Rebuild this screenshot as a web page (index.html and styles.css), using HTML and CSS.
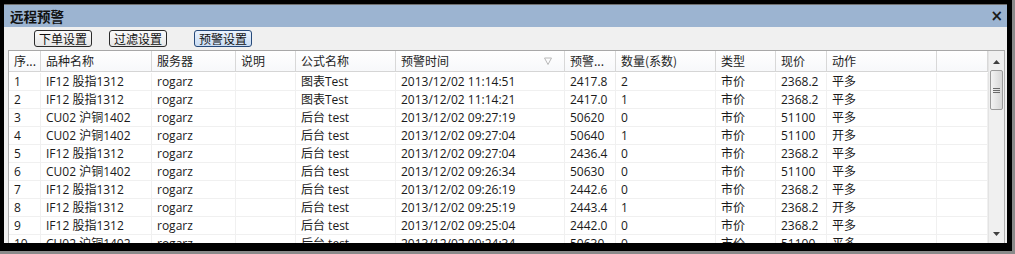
FILE: index.html
```html
<!DOCTYPE html>
<html>
<head>
<meta charset="utf-8">
<link rel="stylesheet" href="styles.css">
</head>
<body>
<div class="frame">
  <div class="win">
    <div class="titlebar">
      <span class="title">远程预警</span>
      <span class="close">×</span>
    </div>
    <div class="toolbar">
      <span class="btn b1">下单设置</span>
      <span class="btn b2">过滤设置</span>
      <span class="btn b3 active">预警设置</span>
    </div>
    <div class="list">
      <div class="table">
        <div class="row head">
          <div class="c">序...</div><div class="c">品种名称</div><div class="c">服务器</div><div class="c">说明</div><div class="c">公式名称</div>
          <div class="c sortcol">预警时间<svg class="sort" width="8" height="8" viewBox="0 0 8 8"><path d="M0.5 1 L7.5 1 L4 7.5 Z" fill="none" stroke="#b8b8b8" stroke-width="1"/></svg></div>
          <div class="c">预警...</div><div class="c">数量(系数)</div><div class="c">类型</div><div class="c">现价</div><div class="c">动作</div><div class="c"></div>
        </div>
        <div class="row"><div class="c">1</div><div class="c">IF12 股指1312</div><div class="c">rogarz</div><div class="c"></div><div class="c">图表Test</div><div class="c">2013/12/02 11:14:51</div><div class="c">2417.8</div><div class="c">2</div><div class="c">市价</div><div class="c">2368.2</div><div class="c">平多</div><div class="c"></div></div>
        <div class="row"><div class="c">2</div><div class="c">IF12 股指1312</div><div class="c">rogarz</div><div class="c"></div><div class="c">图表Test</div><div class="c">2013/12/02 11:14:21</div><div class="c">2417.0</div><div class="c">1</div><div class="c">市价</div><div class="c">2368.2</div><div class="c">平多</div><div class="c"></div></div>
        <div class="row"><div class="c">3</div><div class="c">CU02 沪铜1402</div><div class="c">rogarz</div><div class="c"></div><div class="c">后台 test</div><div class="c">2013/12/02 09:27:19</div><div class="c">50620</div><div class="c">0</div><div class="c">市价</div><div class="c">51100</div><div class="c">平多</div><div class="c"></div></div>
        <div class="row"><div class="c">4</div><div class="c">CU02 沪铜1402</div><div class="c">rogarz</div><div class="c"></div><div class="c">后台 test</div><div class="c">2013/12/02 09:27:04</div><div class="c">50640</div><div class="c">1</div><div class="c">市价</div><div class="c">51100</div><div class="c">开多</div><div class="c"></div></div>
        <div class="row"><div class="c">5</div><div class="c">IF12 股指1312</div><div class="c">rogarz</div><div class="c"></div><div class="c">后台 test</div><div class="c">2013/12/02 09:27:04</div><div class="c">2436.4</div><div class="c">0</div><div class="c">市价</div><div class="c">2368.2</div><div class="c">平多</div><div class="c"></div></div>
        <div class="row"><div class="c">6</div><div class="c">CU02 沪铜1402</div><div class="c">rogarz</div><div class="c"></div><div class="c">后台 test</div><div class="c">2013/12/02 09:26:34</div><div class="c">50630</div><div class="c">0</div><div class="c">市价</div><div class="c">51100</div><div class="c">平多</div><div class="c"></div></div>
        <div class="row"><div class="c">7</div><div class="c">IF12 股指1312</div><div class="c">rogarz</div><div class="c"></div><div class="c">后台 test</div><div class="c">2013/12/02 09:26:19</div><div class="c">2442.6</div><div class="c">0</div><div class="c">市价</div><div class="c">2368.2</div><div class="c">平多</div><div class="c"></div></div>
        <div class="row"><div class="c">8</div><div class="c">IF12 股指1312</div><div class="c">rogarz</div><div class="c"></div><div class="c">后台 test</div><div class="c">2013/12/02 09:25:19</div><div class="c">2443.4</div><div class="c">1</div><div class="c">市价</div><div class="c">2368.2</div><div class="c">开多</div><div class="c"></div></div>
        <div class="row"><div class="c">9</div><div class="c">IF12 股指1312</div><div class="c">rogarz</div><div class="c"></div><div class="c">后台 test</div><div class="c">2013/12/02 09:25:04</div><div class="c">2442.0</div><div class="c">0</div><div class="c">市价</div><div class="c">2368.2</div><div class="c">平多</div><div class="c"></div></div>
        <div class="row"><div class="c">10</div><div class="c">CU02 沪铜1402</div><div class="c">rogarz</div><div class="c"></div><div class="c">后台 test</div><div class="c">2013/12/02 09:24:34</div><div class="c">50630</div><div class="c">0</div><div class="c">市价</div><div class="c">51100</div><div class="c">平多</div><div class="c"></div></div>
      </div>
      <div class="scrollbar">
        <div class="arrow up"><svg width="7" height="4" viewBox="0 0 7 4"><path d="M3.5 0 L7 4 L0 4 Z" fill="#404040"/></svg></div>
        <div class="thumb"><span class="grip"></span><span class="grip"></span><span class="grip"></span></div>
        <div class="track"></div>
        <div class="arrow down"><svg width="7" height="4" viewBox="0 0 7 4"><path d="M0 0 L7 0 L3.5 4 Z" fill="#404040"/></svg></div>
      </div>
    </div>
  </div>
</div>
</body>
</html>
```

FILE: styles.css
```css
html, body {
  margin: 0;
  padding: 0;
  background: #8a8a8a;
}
body {
  width: 1015px;
  height: 254px;
  overflow: hidden;
  font-family: "Open Sans", "Noto Sans CJK SC", sans-serif;
  font-size: 12px;
  color: #1a1a1a;
}
.frame {
  width: 1004px;
  height: 239px;
  background: #000;
  padding: 4px 4px 8px 4px;
}
.win {
  width: 1003px;
  height: 239px;
  background: #f0f0f0;
  display: flex;
  flex-direction: column;
  overflow: hidden;
  border-top: 1px solid #6f6f6f;
  box-sizing: border-box;
}
.titlebar {
  height: 22px;
  flex: none;
  background: #9cb4d1;
  display: flex;
  align-items: center;
  justify-content: space-between;
  padding: 0 4px 0 6px;
}
.title {
  font-family: "Noto Sans CJK SC", sans-serif;
  font-weight: bold;
  font-size: 13.5px;
  color: #111;
}
.close {
  font-family: "DejaVu Sans", sans-serif;
  font-size: 15px;
  font-weight: bold;
  color: #1a1a1a;
  line-height: 1;
}
.toolbar {
  height: 23px;
  flex: none;
  display: flex;
  align-items: flex-start;
  padding-top: 3px;
  box-sizing: border-box;
}
.btn {
  height: 17px;
  box-sizing: border-box;
  border: 1px solid #2a2a2a;
  border-radius: 3px;
  background: linear-gradient(#fbfbfb, #e6e6e6);
  font-family: "Noto Sans CJK SC", sans-serif;
  font-size: 12px;
  line-height: 15px;
  padding: 0 4px;
  color: #111;
  display: inline-flex;
  align-items: center;
  justify-content: center;
}
.b1 { margin-left: 30px; width: 58px; }
.b2 { margin-left: 17px; width: 58px; }
.b3 { margin-left: 27px; width: 58px; }
.active {
  background: linear-gradient(#eaf2fc, #c9dcf4);
  border-color: #274a7a;
}
.list {
  flex: 1;
  margin: 0 2px 0 4px;
  display: flex;
  border-top: 1px solid #a8a8a8;
  border-left: 1px solid #b0b0b0;
  border-right: 1px solid #b0b0b0;
  background: #fff;
  overflow: hidden;
}
.table {
  width: 979px;
  flex: none;
  display: flex;
  flex-direction: column;
}
.row {
  display: grid;
  grid-template-columns: 32px 111px 84px 60px 100px 169px 51px 100px 60px 51px 110px 51px;
  height: 18px;
  flex: none;
  border-bottom: 1px solid #f0f0f0;
  box-sizing: border-box;
  background: #fff;
}
.row .c {
  border-right: 1px solid #f0f0f0;
  padding-left: 5px;
  line-height: 17px;
  white-space: nowrap;
  overflow: hidden;
  box-sizing: border-box;
}
.row.head {
  height: 21px;
  border-bottom: 1px solid #d5d5d5;
  background: linear-gradient(#ffffff, #f7f8fa);
  margin-bottom: 1px;
}
.row.head .c {
  border-right: 1px solid #d8d8d8;
  line-height: 20px;
  font-family: "Noto Sans CJK SC", sans-serif;
  color: #1e1e1e;
}
.sortcol {
  position: relative;
}
.sort {
  position: absolute;
  right: 12px;
  top: 6px;
}
.scrollbar {
  flex: 1;
  display: flex;
  flex-direction: column;
  background: #f0f0f0;
  border-left: 1px solid #e3e3e3;
}
.arrow {
  height: 17px;
  display: flex;
  align-items: center;
  justify-content: center;
  flex: none;
}
.arrow.up { margin-top: 2px; }
.thumb {
  height: 40px;
  margin: 0 1px;
  border: 1px solid #9a9a9a;
  border-radius: 2px;
  background: linear-gradient(90deg, #f3f3f3, #e2e2e2 60%, #d6d6d6);
  display: flex;
  flex-direction: column;
  align-items: center;
  justify-content: center;
  gap: 1px;
  flex: none;
  box-sizing: border-box;
}
.grip {
  width: 7px;
  height: 1px;
  background: #6a6a6a;
}
.track {
  flex: 1;
}
.arrow.down {
  height: 14px;
  margin-bottom: 2px;
}
```
